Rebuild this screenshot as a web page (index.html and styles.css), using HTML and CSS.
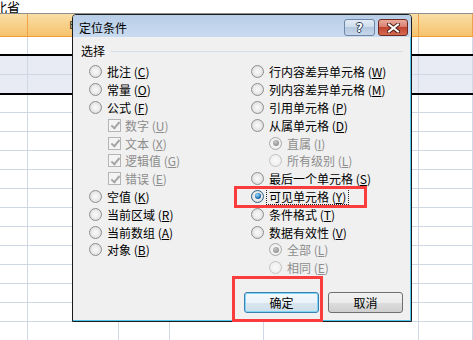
FILE: index.html
```html
<!DOCTYPE html>
<html lang="zh-CN">
  <head>
    <meta charset="UTF-8" />
    <title>定位条件</title>
    <link rel="stylesheet" href="styles.css">
  </head>
  <body>
    <div class="page">
      <div class="formula">北省</div>
      <div class="sheet">
        <div class="row head"><span></span><span class="col-name">B</span><span></span><span></span><span></span><span></span></div>
        <div class="row thick"><span></span><span></span><span></span><span></span><span></span><span></span></div>
        <div class="row band"><span></span><span></span><span></span><span></span><span></span><span></span></div>
        <div class="row band thick tall"><span></span><span></span><span></span><span></span><span></span><span></span></div>
        <div class="row short"><span></span><span></span><span></span><span></span><span></span><span></span></div>
        <div class="row"><span></span><span></span><span></span><span></span><span></span><span></span></div>
        <div class="row"><span></span><span></span><span></span><span></span><span></span><span></span></div>
        <div class="row"><span></span><span></span><span></span><span></span><span></span><span></span></div>
        <div class="row"><span></span><span></span><span></span><span></span><span></span><span></span></div>
        <div class="row"><span></span><span></span><span></span><span></span><span></span><span></span></div>
        <div class="row"><span></span><span></span><span></span><span></span><span></span><span></span></div>
        <div class="row"><span></span><span></span><span></span><span></span><span></span><span></span></div>
        <div class="row"><span></span><span></span><span></span><span></span><span></span><span></span></div>
        <div class="row"><span></span><span></span><span></span><span></span><span></span><span></span></div>
        <div class="row"><span></span><span></span><span></span><span></span><span></span><span></span></div>
        <div class="row"><span></span><span></span><span></span><span></span><span></span><span></span></div>
        <div class="row"><span></span><span></span><span></span><span></span><span></span><span></span></div>
      </div>

      <div class="dialog">
        <div class="titlebar">
          <span class="title">定位条件</span>
          <div class="title-btns">
            <span class="tbtn help">?</span>
            <span class="tbtn close">
              <svg width="13" height="10" viewBox="0 0 13 10">
                <path d="M2 1.5 L11 8.5 M11 1.5 L2 8.5" stroke="#4a1d16" stroke-width="4" stroke-linecap="square" />
                <path d="M2 1.5 L11 8.5 M11 1.5 L2 8.5" stroke="#ffffff" stroke-width="2" stroke-linecap="square" />
              </svg>
            </span>
          </div>
        </div>
        <div class="content">
          <div class="legend">
            <span>选择</span>
            <span class="legend-line"></span>
          </div>
          <div class="columns">
            <div class="col">
              <div class="opt"><span class="radio"></span>批注 (<u>C</u>)</div>
              <div class="opt"><span class="radio"></span>常量 (<u>O</u>)</div>
              <div class="opt"><span class="radio"></span>公式 (<u>F</u>)</div>
              <div class="opt sub-check off"><span class="check"></span>数字 (<u>U</u>)</div>
              <div class="opt sub-check off"><span class="check"></span>文本 (<u>X</u>)</div>
              <div class="opt sub-check off"><span class="check"></span>逻辑值 (<u>G</u>)</div>
              <div class="opt sub-check off"><span class="check"></span>错误 (<u>E</u>)</div>
              <div class="opt"><span class="radio"></span>空值 (<u>K</u>)</div>
              <div class="opt"><span class="radio"></span>当前区域 (<u>R</u>)</div>
              <div class="opt"><span class="radio"></span>当前数组 (<u>A</u>)</div>
              <div class="opt"><span class="radio"></span>对象 (<u>B</u>)</div>
            </div>
            <div class="col">
              <div class="opt"><span class="radio"></span>行内容差异单元格 (<u>W</u>)</div>
              <div class="opt"><span class="radio"></span>列内容差异单元格 (<u>M</u>)</div>
              <div class="opt"><span class="radio"></span>引用单元格 (<u>P</u>)</div>
              <div class="opt"><span class="radio"></span>从属单元格 (<u>D</u>)</div>
              <div class="opt sub-radio off"><span class="radio dot"></span>直属 (<u>I</u>)</div>
              <div class="opt sub-radio off"><span class="radio"></span>所有级别 (<u>L</u>)</div>
              <div class="opt"><span class="radio"></span>最后一个单元格 (<u>S</u>)</div>
              <div class="opt"><span class="radio selected"></span><span class="focus">可见单元格 (<u>Y</u>)</span></div>
              <div class="opt"><span class="radio"></span>条件格式 (<u>T</u>)</div>
              <div class="opt"><span class="radio"></span>数据有效性 (<u>V</u>)</div>
              <div class="opt sub-radio off"><span class="radio dot"></span>全部 (<u>L</u>)</div>
              <div class="opt sub-radio off"><span class="radio"></span>相同 (<u>E</u>)</div>
            </div>
          </div>
          <div class="buttons">
            <button class="btn default">确定</button>
            <button class="btn">取消</button>
          </div>
        </div>
      </div>

      <div class="mark mark-visible"></div>
      <div class="mark mark-ok"></div>
    </div>
  </body>
</html>
```

FILE: styles.css
```css
body {
  margin: 0;
  font-family: "Noto Sans CJK SC", "Liberation Sans", sans-serif;
  font-size: 12px;
  color: #000;
  background: #fff;
}
.page {
  position: relative;
  width: 473px;
  height: 340px;
  overflow: hidden;
}
.formula {
  height: 14px;
  box-sizing: border-box;
  border-bottom: 1px solid #8e8e8e;
  font-size: 13px;
  line-height: 13px;
  text-indent: -6px;
  overflow: hidden;
  white-space: nowrap;
}
.row {
  display: grid;
  grid-template-columns: 28px 91px 51px 94px 155px 1fr;
  height: 19px;
  box-sizing: border-box;
  border-bottom: 1px solid #d0d7e5;
}
.row span {
  border-right: 1px solid #d0d7e5;
}
.row.head {
  height: 23px;
  background: linear-gradient(#f9dea6, #f5c36c);
  border-bottom: 1px solid #f29b35;
}
.row.head span {
  border-right-color: #f0a24a;
}
.col-name {
  text-align: center;
  font-family: "Liberation Sans", sans-serif;
  font-size: 11px;
  line-height: 22px;
  color: #333;
}
.row.band {
  background: #e8ebf4;
}
.row.thick {
  border-bottom: 2px solid #000;
}
.row.tall {
  height: 20px;
}
.row.short {
  height: 18px;
}

/* dialog */
.dialog {
  position: absolute;
  left: 72px;
  top: 14px;
  width: 340px;
  height: 308px;
  box-sizing: border-box;
  border: 1px solid #1c1c1c;
  border-radius: 4px 4px 0 0;
  background: #f0f0f0;
  box-shadow: inset -1px -1px 0 #4fc4ea;
  display: flex;
  flex-direction: column;
}
.titlebar {
  display: flex;
  height: 22px;
  padding: 0 3px 0 6px;
  background: linear-gradient(#b8cde7, #c9dbef);
  border-radius: 3px 3px 0 0;
}
.title {
  margin-top: 6px;
  line-height: 14px;
}
.title-btns {
  margin-left: auto;
  margin-top: 4px;
  display: flex;
  gap: 3px;
}
.tbtn {
  height: 17px;
  box-sizing: border-box;
  border-radius: 3px;
  display: flex;
  align-items: center;
  justify-content: center;
}
.help {
  width: 31px;
  border: 1px solid #6f86a6;
  background: linear-gradient(#e4ecf6 0%, #cddbeb 50%, #b5c8df 50%, #c6d6ea 100%);
  color: #fff;
  font-family: "DejaVu Sans", sans-serif;
  font-weight: bold;
  font-size: 12px;
  text-shadow: 1px 0 0 #2b3f5a, -1px 0 0 #2b3f5a, 0 1px 0 #2b3f5a, 0 -1px 0 #2b3f5a;
}
.close {
  width: 30px;
  border: 1px solid #6e2a20;
  background: linear-gradient(#e9aa9b 0%, #d77c6b 50%, #c2452f 50%, #d56a52 100%);
}
.content {
  flex: 1;
  display: flex;
  flex-direction: column;
  padding: 7px 8px 8px 8px;
}
.legend {
  display: flex;
  align-items: center;
  line-height: 14px;
}
.legend-line {
  flex: 1;
  height: 1px;
  margin-left: 5px;
  background: #d5dfe5;
}
.columns {
  display: grid;
  grid-template-columns: 162px 1fr;
  margin: 5px 0 0 8px;
}
.opt {
  display: flex;
  align-items: center;
  height: 17.8px;
  white-space: nowrap;
}
.opt u {
  text-underline-offset: 1px;
}
.opt.off {
  color: #8d8d8d;
}
.sub-check {
  padding-left: 19px;
}
.sub-radio {
  padding-left: 18px;
}
.radio {
  position: relative;
  width: 13px;
  height: 13px;
  box-sizing: border-box;
  border-radius: 50%;
  border: 1px solid #8e8f8f;
  background: radial-gradient(circle, #fbfbfb 0%, #e8e8e8 55%, #cdcdcd 100%);
  margin-right: 5px;
  flex: none;
}
.off .radio {
  border-color: #c3c3c3;
  background: radial-gradient(circle, #fafafa 0%, #f0f0f0 60%, #e2e2e2 100%);
}
.radio.dot::after,
.radio.selected::after {
  content: "";
  position: absolute;
  left: 2.5px;
  top: 2.5px;
  width: 6px;
  height: 6px;
  border-radius: 50%;
  background: radial-gradient(circle at 40% 35%, #c8c8c8, #7c7c7c);
}
.off .radio.dot {
  border-color: #a9a9a9;
}
.radio.selected {
  border-color: #2c5f88;
}
.radio.selected::after {
  background: radial-gradient(circle at 40% 35%, #9ee0ff, #1a6cb0 60%, #0d3f6e);
}
.check {
  position: relative;
  width: 13px;
  height: 13px;
  box-sizing: border-box;
  border: 1px solid #b4b4b4;
  background: #f4f4f4;
  margin-right: 4px;
  flex: none;
}
.check::after {
  content: "";
  position: absolute;
  left: 3.5px;
  top: 0.5px;
  width: 3px;
  height: 7px;
  border-right: 2px solid #a6a6a6;
  border-bottom: 2px solid #a6a6a6;
  transform: rotate(40deg);
}
.focus {
  border: 1px dotted #222;
  padding: 0 2px;
  margin-left: -3px;
  line-height: 15px;
}
.buttons {
  margin-top: auto;
  display: flex;
  justify-content: flex-end;
  gap: 9px;
}
.btn {
  width: 75px;
  height: 21px;
  padding: 0;
  font-family: inherit;
  font-size: 12px;
  color: #000;
  border: 1px solid #707070;
  border-radius: 3px;
  background: linear-gradient(#f2f2f2 0%, #ebebeb 50%, #dddddd 50%, #cfcfcf 100%);
}
.btn.default {
  border-color: #3c7fb1;
  box-shadow: inset 0 0 0 1px #7fd6f7;
  background: linear-gradient(#f4f9fc 0%, #e9f3f9 50%, #d9e6ef 50%, #cddfe9 100%);
}

/* annotation boxes */
.mark {
  position: absolute;
  box-sizing: border-box;
  border: 3px solid #fb3c3c;
}
.mark-visible {
  left: 234px;
  top: 186px;
  width: 133px;
  height: 22px;
}
.mark-ok {
  left: 232px;
  top: 276px;
  width: 91px;
  height: 46px;
}
```
